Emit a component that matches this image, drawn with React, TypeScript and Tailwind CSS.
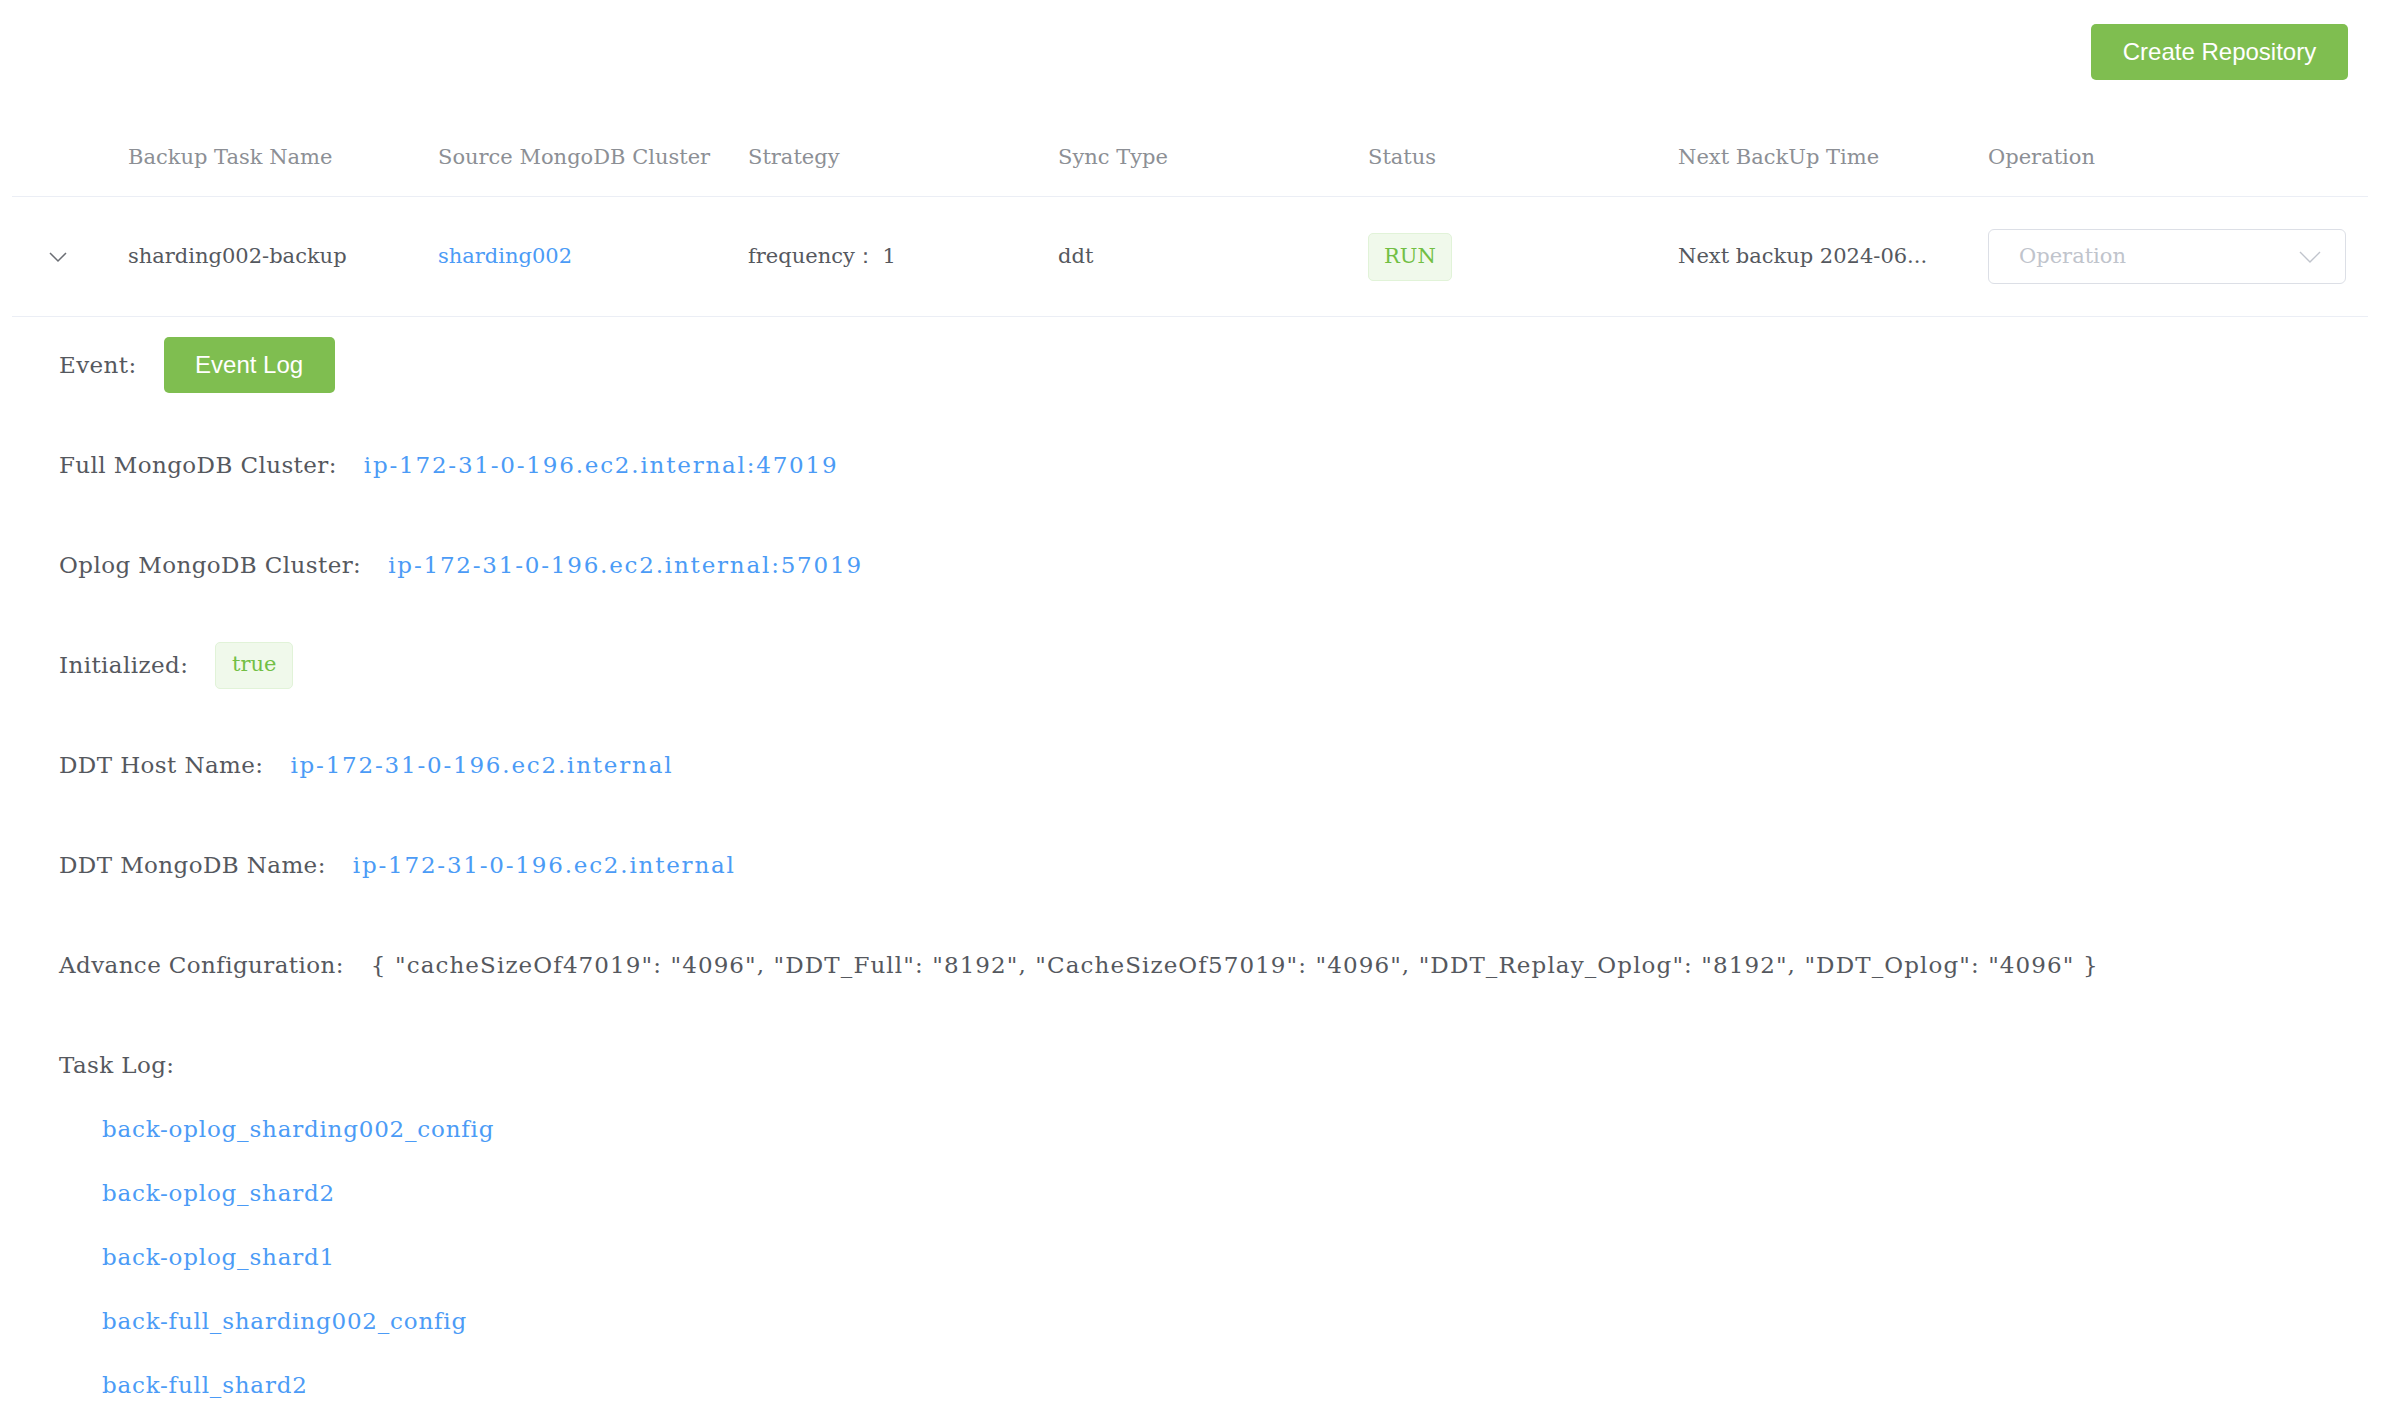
const SERIF = "font-['DejaVu_Serif',serif]";
const SANS = "font-['Liberation_Sans',Arial,sans-serif]";

const columns = [
  "Backup Task Name",
  "Source MongoDB Cluster",
  "Strategy",
  "Sync Type",
  "Status",
  "Next BackUp Time",
];

const taskLogs = [
  "back-oplog_sharding002_config",
  "back-oplog_shard2",
  "back-oplog_shard1",
  "back-full_sharding002_config",
  "back-full_shard2",
];

const advanceConfig =
  '{ "cacheSizeOf47019": "4096", "DDT_Full": "8192", "CacheSizeOf57019": "4096", "DDT_Replay_Oplog": "8192", "DDT_Oplog": "4096" }';

function DetailRow({ label, children }: { label: string; children?: React.ReactNode }) {
  return (
    <div className="flex h-[56px] items-center">
      <span className="mr-[27px] tracking-[0.4px]">{label}</span>
      {children}
    </div>
  );
}

function Link({ children }: { children: React.ReactNode }) {
  return <span className="tracking-[1.8px] text-[#4b9bf6]">{children}</span>;
}

export default function App() {
  return (
    <div className={`min-h-screen bg-white ${SERIF}`}>
      {/* Toolbar */}
      <div className="flex justify-end pt-[24px] pr-[34px]">
        <button
          className={`h-[56px] w-[257px] rounded-[5px] bg-[#7fbe50] text-[24px] text-white ${SANS}`}
        >
          Create Repository
        </button>
      </div>

      {/* Table */}
      <div className="ml-[12px] mr-[14px] mt-[35px]">
        <div className="flex h-[82px] items-center border-b border-[#ebeef5] pt-[4px] text-[21px] text-[#8c8f95]">
          <div className="w-[96px] shrink-0" />
          {columns.map((c) => (
            <div key={c} className="w-[310px] shrink-0 pl-[20px]">
              {c}
            </div>
          ))}
          <div className="flex-1 pl-[20px]">Operation</div>
        </div>

        <div className="flex h-[120px] items-center border-b border-[#ebeef5] text-[21px] text-[#55585e]">
          <div className="flex w-[96px] shrink-0 justify-center pr-[4px]">
            <svg width="20" height="12" viewBox="0 0 20 12" fill="none" stroke="#6b6e74" strokeWidth="1.5">
              <path d="M2 2l8 8 8-8" />
            </svg>
          </div>
          <div className="w-[310px] shrink-0 pl-[20px]">sharding002-backup</div>
          <div className="w-[310px] shrink-0 pl-[20px] text-[#4b9bf6]">sharding002</div>
          <div className="w-[310px] shrink-0 pl-[20px]">frequency：&nbsp;1</div>
          <div className="w-[310px] shrink-0 pl-[20px]">ddt</div>
          <div className="w-[310px] shrink-0 pl-[20px]">
            <span className="inline-flex h-[48px] w-[84px] items-center justify-center rounded-[5px] border border-[#e1f3d8] bg-[#f0f9eb] text-[#72bf44]">
              RUN
            </span>
          </div>
          <div className="w-[310px] shrink-0 whitespace-nowrap pl-[20px]">Next backup 2024-06...</div>
          <div className="flex-1 pl-[20px] pr-[22px]">
            <div className="flex h-[55px] items-center justify-between rounded-[6px] border border-[#dcdfe6] pl-[30px] pr-[24px] text-[#c0c4cc]">
              <span>Operation</span>
              <svg width="22" height="12" viewBox="0 0 22 12" fill="none" stroke="#c0c4cc" strokeWidth="1.4">
                <path d="M1 1l10 10 10-10" />
              </svg>
            </div>
          </div>
        </div>

        {/* Expanded detail */}
        <div className="pl-[47px] pt-[20px] text-[23px] text-[#55585e]">
          <div className="flex flex-col gap-[44px]">
            <DetailRow label="Event:">
              <button
                className={`h-[56px] w-[171px] rounded-[5px] bg-[#7fbe50] text-[24px] text-white ${SANS}`}
              >
                Event Log
              </button>
            </DetailRow>
            <DetailRow label="Full MongoDB Cluster:">
              <Link>ip-172-31-0-196.ec2.internal:47019</Link>
            </DetailRow>
            <DetailRow label="Oplog MongoDB Cluster:">
              <Link>ip-172-31-0-196.ec2.internal:57019</Link>
            </DetailRow>
            <DetailRow label="Initialized:">
              <span className="inline-flex h-[47px] w-[78px] items-center justify-center rounded-[5px] border border-[#e1f3d8] bg-[#f0f9eb] text-[21px] text-[#72bf44]">
                true
              </span>
            </DetailRow>
            <DetailRow label="DDT Host Name:">
              <Link>ip-172-31-0-196.ec2.internal</Link>
            </DetailRow>
            <DetailRow label="DDT MongoDB Name:">
              <Link>ip-172-31-0-196.ec2.internal</Link>
            </DetailRow>
            <DetailRow label="Advance Configuration:">
              <span className="tracking-[1.1px]">{advanceConfig}</span>
            </DetailRow>
            <DetailRow label="Task Log:" />
          </div>
          <div className="mt-[4px] flex flex-col pl-[43px]">
            {taskLogs.map((t) => (
              <div key={t} className="flex h-[64px] items-center tracking-[0.8px] text-[#4b9bf6]">
                {t}
              </div>
            ))}
          </div>
        </div>
      </div>
    </div>
  );
}
